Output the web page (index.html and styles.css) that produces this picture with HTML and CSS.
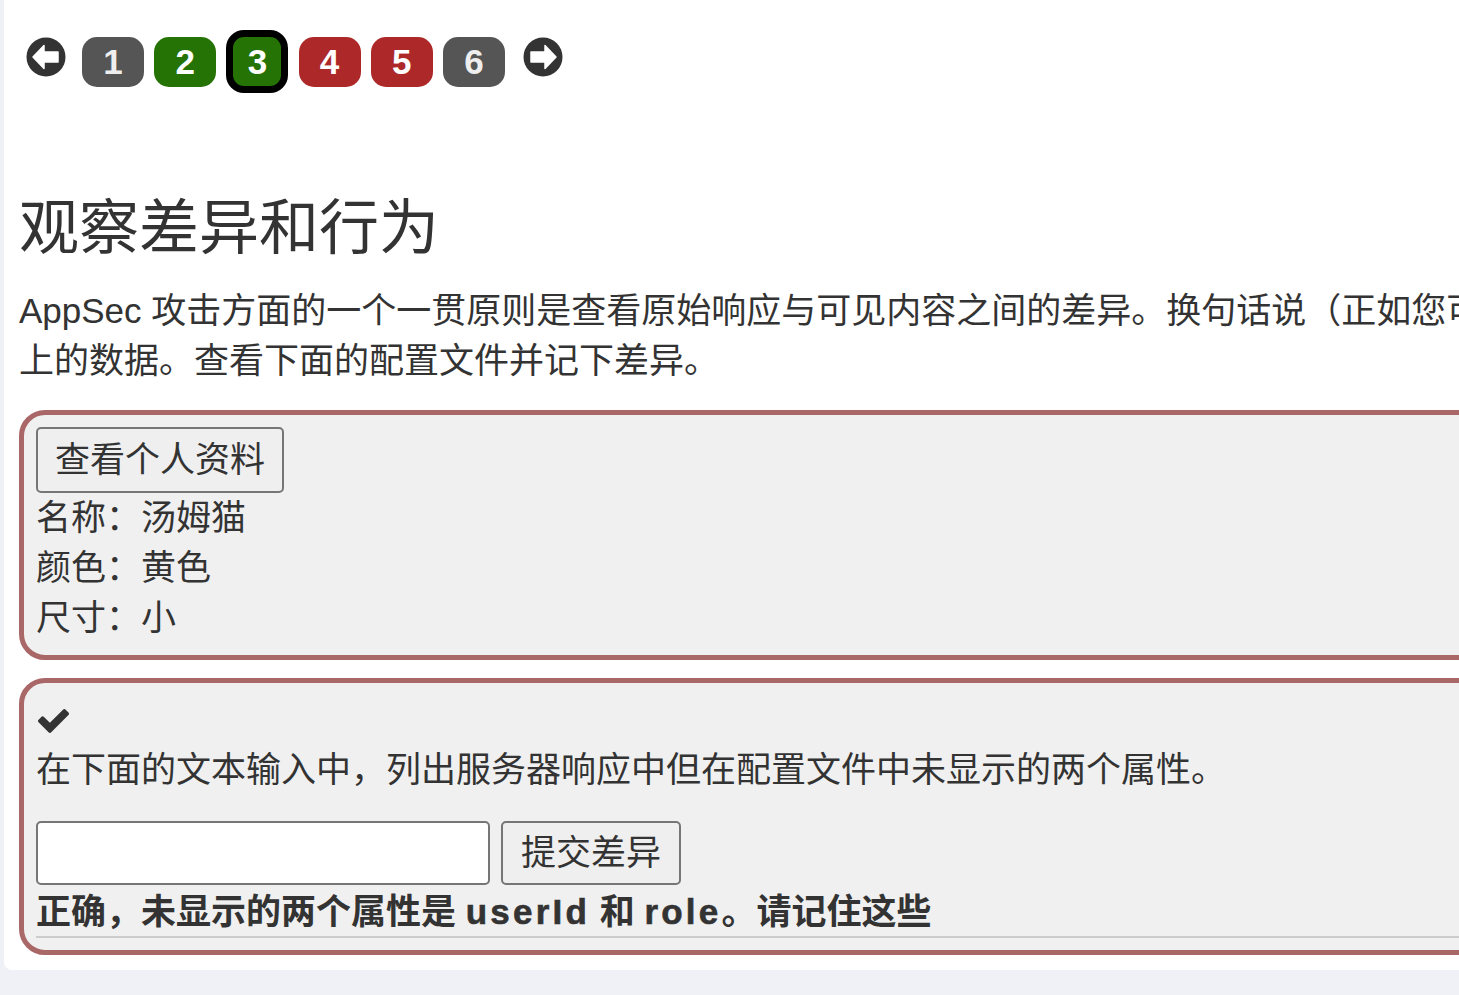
FILE: index.html
```html
<!DOCTYPE html>
<html lang="zh-CN">
<head>
<meta charset="utf-8">
<title>观察差异和行为</title>
<link rel="stylesheet" href="styles.css">
</head>
<body>
<div class="panel">
  <nav class="pager">
    <span class="arrow arrow-prev">
      <svg viewBox="0 0 40 40" width="40" height="40"><circle cx="20" cy="20" r="19.5" fill="#333"/><path d="M7 20 L18 8.5 L18 15 L32 15 L32 25 L18 25 L18 31.5 Z" fill="#fff" stroke="#fff" stroke-width="1.5" stroke-linejoin="round"/></svg>
    </span>
    <span class="pg pg-grey">1</span>
    <span class="pg pg-green">2</span>
    <span class="pg pg-green pg-current">3</span>
    <span class="pg pg-red">4</span>
    <span class="pg pg-red">5</span>
    <span class="pg pg-grey">6</span>
    <span class="arrow arrow-next">
      <svg viewBox="0 0 40 40" width="40" height="40"><circle cx="20" cy="20" r="19.5" fill="#333"/><path d="M33 20 L22 8.5 L22 15 L8 15 L8 25 L22 25 L22 31.5 Z" fill="#fff" stroke="#fff" stroke-width="1.5" stroke-linejoin="round"/></svg>
    </span>
  </nav>

  <h2 class="title">观察差异和行为</h2>
  <p class="intro">AppSec 攻击方面的一个一贯原则是查看原始响应与可见内容之间的差异。换句话说（正如您可能已经在之前的课程中注意到的那样），响应中通常包含未显示在屏幕<br>上的数据。查看下面的配置文件并记下差异。</p>

  <div class="lesson-box">
    <button class="btn" type="button">查看个人资料</button>
    <div class="line">名称：汤姆猫</div>
    <div class="line">颜色：黄色</div>
    <div class="line">尺寸：小</div>
  </div>

  <div class="lesson-box">
    <div class="check">
      <svg viewBox="121 334 1550 1188" width="31" height="24"><path fill="#333" d="M1671 566q0 40-28 68l-724 724-136 136q-28 28-68 28t-68-28l-136-136-362-362q-28-28-28-68t28-68l136-136q28-28 68-28t68 28l294 295 656-657q28-28 68-28t68 28l136 136q28 28 28 68z"/></svg>
    </div>
    <p class="task">在下面的文本输入中，列出服务器响应中但在配置文件中未显示的两个属性。</p>
    <form class="answer">
      <input class="field" type="text" name="answer">
      <button class="btn" type="button">提交差异</button>
    </form>
    <div class="feedback">正确，未显示的两个属性是 <span class="lat">userId</span> 和 <span class="lat">role</span>。请记住这些</div>
    <hr class="rule">
  </div>
</div>
</body>
</html>
```

FILE: styles.css
```css
html, body {
  margin: 0;
  padding: 0;
  overflow: hidden;
  background: #f0f1f6;
}

body {
  font-family: "Liberation Sans", "Noto Sans CJK SC", sans-serif;
  font-size: 35px;
  line-height: 50px;
  color: #333;
}

.panel {
  width: 2400px;
  margin-left: 4px;
  padding: 30px 15px 15px 15px;
  box-sizing: border-box;
  background: #fff;
  border-radius: 0 0 8px 8px;
}

.pager {
  display: flex;
  align-items: center;
  height: 63px;
  padding-left: 7px;
}

.arrow {
  align-self: flex-start;
  margin-top: 7px;
  width: 40px;
  height: 40px;
  display: block;
}

.arrow svg {
  display: block;
}

.arrow-prev {
  margin-right: 16px;
}

.arrow-next {
  margin-left: 8px;
}

.pg {
  width: 62px;
  height: 50px;
  box-sizing: border-box;
  border-radius: 15px;
  display: flex;
  align-items: center;
  justify-content: center;
  font-family: "Liberation Sans", sans-serif;
  font-weight: bold;
  font-size: 35px;
  line-height: 1;
  color: #fff;
  margin-right: 10.2px;
}

.pg-grey {
  background: #555;
  color: #eee;
}

.pg-green {
  background: #267305;
}

.pg-red {
  background: #ad2828;
}

.pg-current {
  height: 63px;
  border: 7px solid #000;
  border-radius: 18px;
}

.title {
  margin: 103px 0 0 0;
  font-size: 60px;
  line-height: 66px;
  font-weight: normal;
  color: #333;
}

.intro {
  margin: 24px 0 24px 0;
  white-space: nowrap;
}

.lesson-box {
  background: #f0f0f0;
  border: 5px solid #a96767;
  border-radius: 26px;
  padding: 12px 12px 12px 12px;
  margin-bottom: 18px;
}

.lesson-box:last-child {
  margin-bottom: 0;
}

.btn {
  font-family: "Liberation Sans", "Noto Sans CJK SC", sans-serif;
  font-size: 35px;
  line-height: 50px;
  color: #333;
  background: #efefef;
  border: 2px solid #767676;
  border-radius: 5px;
  padding: 6px 17px;
  margin: 0;
  display: block;
}

.line {
  height: 50px;
}

.check {
  height: 50px;
  display: flex;
  align-items: center;
  padding-left: 2px;
  padding-top: 1px;
  box-sizing: border-box;
}

.check svg {
  display: block;
}

.task {
  margin: 0 0 26px 0;
}

.answer {
  display: flex;
  gap: 11px;
  margin: 0;
}

.field {
  width: 454px;
  height: 64px;
  box-sizing: border-box;
  background: #fff;
  border: 2px solid #767676;
  border-radius: 5px;
  margin: 0;
  padding: 0 6px;
  font-size: 35px;
}

.answer .btn {
  height: 64px;
  box-sizing: border-box;
  padding: 0 18px;
}

.feedback {
  font-weight: bold;
  padding-top: 4px;
  line-height: 46px;
}

.lat {
  letter-spacing: 3.2px;
  -webkit-text-stroke: 0.6px #333;
}

.rule {
  margin: 1px 0 0 0;
  border: 0;
  border-top: 2px solid #cccccc;
  height: 0;
}
```
